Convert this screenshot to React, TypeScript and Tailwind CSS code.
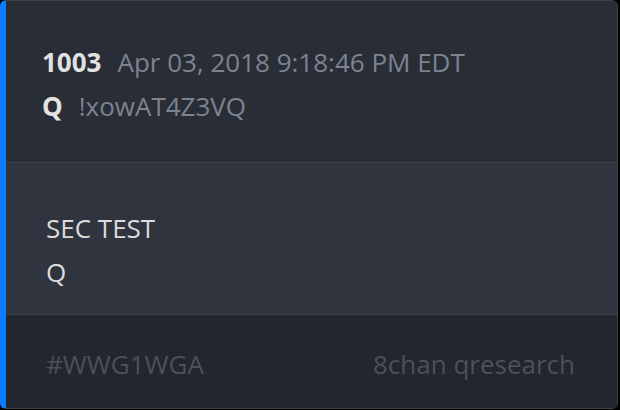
import React from 'react';

const post = {
  num: '1003',
  time: 'Apr 03, 2018 9:18:46 PM EDT',
  name: 'Q',
  trip: '!xowAT4Z3VQ',
  lines: ['SEC TEST', 'Q'],
  tag: '#WWG1WGA',
  source: '8chan qresearch',
};

export default function App() {
  return (
    <div className="w-[620px] h-[410px] bg-black" style={{ fontFamily: '"Open Sans", sans-serif' }}>
      <div className="w-[618px] h-[409px] flex flex-col overflow-hidden rounded-md border border-[#3c414b] border-l-[6px] border-l-[#0a7dff]">
        {/* header */}
        <div className="bg-[#292d36] h-[161px] pl-[36px] pt-[39px] text-[26px] leading-[44px]">
          <div className="flex items-baseline">
            <span className="font-bold text-[#e2e2e2]">{post.num}</span>
            <span className="ml-[16px] text-[#7d8391]">{post.time}</span>
          </div>
          <div className="flex items-baseline">
            <span className="font-bold text-[#e2e2e2]">{post.name}</span>
            <span className="ml-[16px] text-[#7d8391]">{post.trip}</span>
          </div>
        </div>

        {/* body */}
        <div className="bg-[#2f343e] h-[153px] border-y border-[#3d424c] pl-[40px] pt-[43px] text-[26px] leading-[44px] text-[#dcdcdc]">
          {post.lines.map((l, i) => (
            <div key={i}>{l}</div>
          ))}
        </div>

        {/* footer */}
        <div className="bg-[#23262e] flex-1 flex items-center justify-between pl-[40px] pr-[42px] pt-[6px] text-[26px] text-[#4b505c]">
          <span>{post.tag}</span>
          <span>{post.source}</span>
        </div>
      </div>
    </div>
  );
}
